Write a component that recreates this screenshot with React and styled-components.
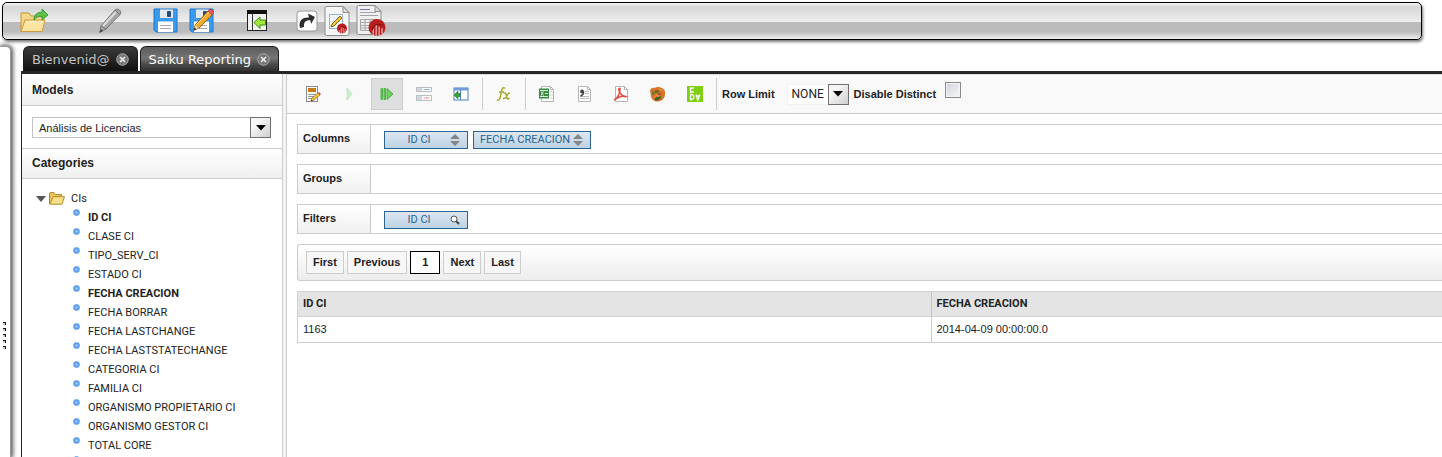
import React, { useState } from 'react';
import styled, { createGlobalStyle, css } from 'styled-components';

const Global = createGlobalStyle`
  *, *::before, *::after { box-sizing: border-box; }
  html, body { margin: 0; background: #fff; }
  body { font: 11px/16px "Liberation Sans", Arial, sans-serif; color: #222; }
  button, select, input { font: inherit; color: inherit; margin: 0; }
  h2, ul { margin: 0; padding: 0; }
`;

const caps = css`font-family: Roboto, "Liberation Sans", sans-serif;`;

const Page = styled.div`
  display: flex;
  flex-direction: column;
  height: 100vh;
  overflow: hidden;
`;

const LauncherBar = styled.header`
  display: flex;
  align-items: center;
  flex: none;
  height: 38px;
  margin: 2px 20px 0 2px;
  padding-left: 16px;
  border: 1px solid #000;
  border-radius: 5px;
  background: linear-gradient(#f4f4f4 0, #d6d6d6 4px, #efefef 19px, #bcbcbc 19px, #bcbcbc 29px, #f0f0f0 100%);
  box-shadow: 1px 2px 3px #777;
`;

const LauncherButton = styled.button`
  display: flex;
  align-items: center;
  justify-content: center;
  width: ${p => p.$width}px;
  height: 36px;
  margin-left: ${p => p.$gap || 0}px;
  padding: 0;
  border: 0;
  background: none;
`;

const Workspace = styled.div`
  display: flex;
  flex: 1;
  min-height: 0;
  padding-top: 6px;
`;

const Drawer = styled.aside`
  display: flex;
  align-items: center;
  width: 11px;
  margin-right: 10px;
  padding: 168px 0 0 3px;
  border: 1px solid #999;
  border-width: 1px 1px 0 0;
  border-radius: 0 5px 0 0;
  background: #fff;
  box-shadow: 1px 0 4px 1px #555;
`;

const Content = styled.div`
  display: flex;
  flex-direction: column;
  flex: 1;
  min-width: 0;
`;

const TabStrip = styled.nav`
  display: flex;
  gap: 2px;
  flex: none;
  padding-left: 2px;
  border-bottom: 3px solid #262626;
`;

const Tab = styled.div`
  display: flex;
  align-items: center;
  gap: 6px;
  height: 25px;
  padding: 1px 8px 0;
  border: 1px solid #1a1a1a;
  border-bottom: 0;
  border-radius: 6px 6px 0 0;
  font: 13px/20px "DejaVu Sans", Verdana, sans-serif;
  color: ${p => (p.$active ? '#fff' : '#c4c4c4')};
  background: ${p => (p.$active
    ? 'linear-gradient(#5c5c5c, #747474 45%, #484848 75%, #303030)'
    : 'linear-gradient(#3a3a3a, #262626 50%, #101010)')};
`;

const TabLabel = styled.button`
  padding: 0;
  border: 0;
  background: none;
`;

const CloseButton = styled.button`
  display: flex;
  padding: 0;
  border: 0;
  background: none;
`;

const Panes = styled.div`
  display: flex;
  flex: 1;
  min-height: 0;
  border-left: 1px solid #222;
`;

const Sidebar = styled.aside`
  width: 261px;
  overflow: hidden;
  border-right: 1px solid #ccc;
`;

const SideTitle = styled.h2`
  height: ${p => p.$height}px;
  padding: ${p => (p.$ruled ? 6 : 8)}px 10px 0;
  border: 0 solid #ccc;
  border-width: ${p => (p.$ruled ? '1px 0' : '0 0 1px')};
  font-size: 12px;
  line-height: 16px;
  background: linear-gradient(#fff, #efefef);
`;

const ModelPicker = styled.div`
  padding: 11px 11px 10px 10px;
`;

const SelectBox = styled.div`
  position: relative;
  width: ${p => p.$width || '100%'};
`;

const Select = styled.select`
  display: block;
  width: 100%;
  height: 21px;
  padding: 0 24px 0 ${p => (p.$plain ? 4 : 6)}px;
  border: 1px solid ${p => (p.$plain ? '#f2f2f2' : '#c4c4c4')};
  border-radius: 0;
  appearance: none;
  background: #fff;
  ${p => p.$plain && css`font: 12px/16px Roboto, sans-serif;`}
`;

const SelectArrow = styled.span`
  position: absolute;
  top: 0;
  right: 0;
  display: flex;
  align-items: center;
  justify-content: center;
  width: 21px;
  height: 21px;
  border: 1px solid #707070;
  background: linear-gradient(135deg, #f6f6f6 30%, #cfcfcf);
  pointer-events: none;
`;

const Tree = styled.div`
  padding: 10px 0 0 14px;
`;

const TreeFolder = styled.button`
  display: flex;
  align-items: center;
  gap: 3px;
  height: 19px;
  padding: 0;
  border: 0;
  background: none;
  ${caps}
`;

const FolderName = styled.span`
  padding: 1px 0 0 3px;
`;

const TreeList = styled.ul`
  padding: 0 0 0 37px;
  list-style: none;
`;

const TreeItem = styled.li`
  display: flex;
  gap: 8px;
  height: 19px;
  line-height: 19px;
  white-space: nowrap;
  font-weight: ${p => (p.$used ? 700 : 400)};
  ${caps}
`;

const Bullet = styled.span`
  width: 7px;
  height: 7px;
  margin: 1px 0 0;
  border: 1px solid #5b9bea;
  border-radius: 50%;
  background: radial-gradient(#9ccaff, #3f87e0);
`;

const Splitter = styled.div`
  width: 4px;
  border-right: 1px solid #ccc;
  background: #f3f3f3;
`;

const Main = styled.main`
  flex: 1;
  min-width: 0;
`;

const ActionBar = styled.div`
  display: flex;
  align-items: center;
  gap: 5px;
  height: 40px;
  padding-left: 10px;
  border-top: 1px solid #ddd;
  border-bottom: 1px solid #c9c9c9;
  background: #f9f9f9;
`;

const ActionButton = styled.button`
  display: flex;
  align-items: center;
  justify-content: center;
  width: 32px;
  height: 32px;
  padding: 0;
  border: 1px solid ${p => (p.$on ? '#ccc' : 'transparent')};
  background: ${p => (p.$on ? '#dedede' : 'none')};
  opacity: ${p => (p.$dim ? 0.4 : 1)};
`;

const Divider = styled.span`
  width: 1px;
  height: 32px;
  background: #ccc;
`;

const ActionLabel = styled.label`
  font-weight: 700;
  white-space: nowrap;
`;

const Spacer = styled.span`
  width: 2px;
`;

const CheckBox = styled.input`
  appearance: none;
  width: 16px;
  height: 16px;
  && { margin: 0 0 8px 4px; }
  border: 1px solid #8a8a8a;
  background: linear-gradient(135deg, #cfd2d8, #f8f8f8);
  box-shadow: inset 0 0 0 1px #f4f4f4;
`;

const Query = styled.div`
  display: flex;
  flex-direction: column;
  gap: 10px;
  padding: 10px 0 0 10px;
`;

const Axis = styled.section`
  display: flex;
  height: 30px;
  border: 1px solid #ccc;
  border-right: 0;
`;

const AxisName = styled.h2`
  width: 73px;
  padding: 4px 5px 0;
  border-right: 1px solid #ccc;
  font-size: 11px;
  line-height: 18px;
  background: linear-gradient(#fff, #f0f0f0);
`;

const AxisFields = styled.div`
  display: flex;
  gap: 5px;
  padding: 6px 13px;
`;

const Field = styled.button`
  display: flex;
  align-items: center;
  gap: 3px;
  height: 18px;
  padding: 0 7px 0 6px;
  border: 1px solid #2c6390;
  color: #2c6390;
  background: linear-gradient(#dbe7f1, #bdd2e3);
  ${caps}
`;

const FieldName = styled.span`
  min-width: 56px;
  text-align: center;
`;

const Pager = styled.nav`
  display: flex;
  gap: 3px;
  height: 37px;
  padding: 6px 8px;
  border: 1px solid #ccc;
  border-right: 0;
  border-radius: 3px 0 0 3px;
  background: linear-gradient(#fff, #ededed);
`;

const PageButton = styled.button`
  height: 23px;
  padding: 0 ${p => (p.$current ? 11 : 6)}px 1px;
  border: 1px solid ${p => (p.$current ? '#000' : '#ccc')};
  font-weight: 700;
  background: ${p => (p.$current ? '#fff' : '#f7f7f7')};
`;

const Results = styled.table`
  width: calc(110% + 8px);
  border-collapse: collapse;
  table-layout: fixed;

  th, td {
    padding: 0 5px 1px;
    border: 1px solid #ccc;
    border-right: 0;
    text-align: left;
  }
  td {
    height: 26px;
    padding-bottom: 2px;
  }
  th {
    height: 25px;
    border-color: #d2d2d2;
    background: #e4e4e4;
    ${caps}
  }
  th + th { border-left-color: #c4c4c4; }
`;

/* ---------- icons ---------- */

const OpenIcon = () => (
  <svg width="30" height="26" viewBox="0 0 30 26">
    <path d="M2 23V5h8l2 3h12v4" fill="#f3d78a" stroke="#c8952e" />
    <path d="M2 23.500 6 12h20l-3 11.500z" fill="#fbe3a0" stroke="#cf9a35" />
    <path d="M7 14h17" stroke="#fff5d4" />
    <path d="M15 12c0-6 4-8 8-7.500V1l6 6-6 5V8.500c-3-.5-6 .5-8 3.500z" fill="#5cc24a" stroke="#3c9a35" />
  </svg>
);
const PencilIcon = () => (
  <svg width="25" height="28" viewBox="0 0 25 28">
    <path d="M2 25l1-6L17 3q2-2 4.500 0t.5 4.500L8 22z" fill="#a6a6a6" stroke="#7a7a7a" />
    <path d="M5 19 18 5" stroke="#ddd" strokeWidth="2" />
    <path d="M17 3l5 5M3 19l5 3" stroke="#777" />
    <path d="M1 26l2-4 2 2z" fill="#444" />
  </svg>
);
const SaveIcon = ({ edit }) => (
  <svg width="25" height="27" viewBox="0 0 25 27">
    <path d="M1 1h23v23H3l-2-2z" fill="#3a9bee" stroke="#1b74cc" />
    <rect x="7" y="1.500" width="13" height="8.500" fill="#e4e9ef" />
    <rect x="14" y="3" width="4" height="6" rx="1" fill="#27487a" />
    <rect x="5" y="13.500" width="15" height="10.500" fill="#fff" />
    <path d="M7 17.500h11M7 20.500h11" stroke="#aaa" />
    {edit && (
      <g>
        <path d="M5 22l1-5L19 3l4 4L10 20z" fill="#f3a92c" stroke="#9b6114" />
        <path d="M7 17 20 4" stroke="#ffd980" />
        <path d="M19 3l1-1.500q2-1 4 1t.5 3L23 7z" fill="#e2585c" stroke="#b33a40" strokeWidth=".6" />
        <path d="M5 22l1-5 4 3z" fill="#ecd2a0" />
        <path d="M4.500 22.500l1-3 2 2z" fill="#222" />
      </g>
    )}
  </svg>
);
const PanelIcon = () => (
  <svg width="20" height="22" viewBox="0 0 20 22">
    <path d="M.5 3v17.500M19.500 3v17.500M0 20.500h20" stroke="#222" fill="none" />
    <rect x="1" y="3" width="18" height="17" fill="#f0f0f0" />
    <path d="M0 0h20v4H0z" fill="#111" />
    <path d="M5.500 4v16" stroke="#333" />
    <path d="M7 12.500 13 7v3h5.500v5H13v3.500z" fill="#a4e63a" stroke="#3f8c12" />
  </svg>
);
const ForwardIcon = () => (
  <svg width="22" height="22" viewBox="0 0 22 22">
    <rect x="1" y="1" width="20" height="20" rx="3" fill="#fff" stroke="#999" />
    <path d="M4 18c-2-8 3-11 9-10.500L12 3.500 19 7l-4 7-.5-3.500c-4-.8-7 1-6.500 6.500z" fill="#2e2e2e" />
  </svg>
);
const Burst = ({ x, y, r }) => (
  <g transform={`translate(${x} ${y}) scale(${r})`}>
    <circle r="1" fill="#b81e1e" />
    <path d="M-.45 1V.15M-.1 1V-.3M.25 1V-.1M.6 .8V.1" stroke="#f0c8c8" strokeWidth=".13" />
    <path d="M-.6 .3Q-.3-.7 .7-.2" stroke="#8e1010" strokeWidth=".14" fill="none" />
  </g>
);
const SheetIcon = () => (
  <svg width="26" height="31" viewBox="0 0 26 31">
    <path d="M1 2q0-1.500 1.500-1.500H19L25 6.500V28q0 1.500-1.500 1.500h-21Q1 29.500 1 28z" fill="#f5f5f5" stroke="#8c8c8c" />
    <path d="M19 .5v6h6z" fill="#ddd" stroke="#8c8c8c" />
    <rect x="5.500" y="8.500" width="13" height="14" fill="#fff" stroke="#9ab4cf" />
    <path d="M6 12h12M6 15.500h12M6 19h12M10 9v13M14 9v13" stroke="#d8e4ef" />
    <path d="M7 21l1-3 8-8 2 2-8 8z" fill="#f2c430" stroke="#5e5024" strokeWidth=".8" />
    <Burst x={18} y={22.5} r={5} />
  </svg>
);
const ReportIcon = () => (
  <svg width="30" height="32" viewBox="0 0 30 32">
    <path d="M1 2q0-1.500 1.500-1.500H19L25 6.500V28q0 1.500-1.500 1.500h-21Q1 29.500 1 28z" fill="#f0f0f0" stroke="#8c8c8c" />
    <path d="M19 .5v6h6z" fill="#ddd" stroke="#8c8c8c" />
    <path d="M4 4.500h10" stroke="#7a7ab4" />
    <path d="M4 7.500h16M4 10.500h18" stroke="#a3a3a8" />
    <path d="M4.500 14.500h16v11h-16zM4.500 17.500h16M4.500 20.500h16M4.500 23h16M9 14.500v11M14 14.500v11" fill="none" stroke="#a6a6a6" />
    <Burst x={21} y={22.5} r={8.5} />
  </svg>
);
const CloseIcon = () => (
  <svg width="13" height="13" viewBox="0 0 13 13">
    <circle cx="6.500" cy="6.500" r="5.800" fill="#777" stroke="#a8a8a8" />
    <path d="M4 4l5 5M9 4l-5 5" stroke="#eee" strokeWidth="1.600" />
  </svg>
);
const DownIcon = () => <svg width="10" height="6" viewBox="0 0 10 6"><path d="M0 0h10L5 5.500z" fill="#000" /></svg>;
const ExpandIcon = () => <svg width="10" height="6" viewBox="0 0 10 6"><path d="M0 0h10L5 6z" fill="#555" /></svg>;
const FolderIcon = () => (
  <svg width="16" height="13" viewBox="0 0 16 13">
    <path d="M.5 12V1.500q0-1 1-1H5l1.500 2h6V5" fill="#e8c25c" stroke="#b08a2c" />
    <path d="M.8 12.200 4 4.700h11.500l-2.700 7.500z" fill="#fbe08c" stroke="#b08a2c" />
  </svg>
);
const GripIcon = () => (
  <svg width="4" height="28" viewBox="0 0 4 28">
    {[0, 6, 12, 18, 24].map(y => (
      <g key={y}><path d={`M0 ${y}h3v3H2V${y + 1}H0z`} fill="#111" /><path d={`M0 ${y + 1}h2v2H0z`} fill="#ccc" /></g>
    ))}
  </svg>
);
const SortIcon = () => (
  <svg width="10" height="12" viewBox="0 0 10 12">
    <path d="M0 5 5 0l5 5zM0 7l5 5 5-5z" fill="#858585" />
  </svg>
);
const SearchIcon = () => (
  <svg width="10" height="12" viewBox="0 0 10 12">
    <path d="M6 7l3 3" stroke="#444" strokeWidth="2" />
    <circle cx="4" cy="5" r="3" fill="#fff" stroke="#555" />
  </svg>
);

const EditReportIcon = () => (
  <svg width="16" height="16" viewBox="0 0 16 16">
    <rect x="1.500" y=".5" width="11" height="15" fill="#f7f7f7" stroke="#8b8b8b" />
    <rect x="3" y="2" width="8" height="4" fill="#c77818" />
    <path d="M3 8.500h8M3 10.500h7M3 12.500h5" stroke="#999" />
    <path d="M6 15l1-3 6-5 2 2-6 5z" fill="#f4c63c" stroke="#8c6a1c" strokeWidth=".7" />
    <path d="M13 7l1-1 2 2-1 1z" fill="#d64a4a" />
    <path d="M6 15l.6-1.600 1 1z" fill="#222" />
  </svg>
);
const RunIcon = () => <svg width="16" height="16" viewBox="0 0 16 16"><path d="M5 2l5 6-5 6z" fill="#8fe08f" stroke="#72c972" /></svg>;
const AutoRunIcon = () => (
  <svg width="16" height="16" viewBox="0 0 16 16">
    <path d="M2 2.500h1.500v11H2zM5 2.500h1.500v11H5zM8 2.500l6 5.500-6 5.500z" fill="#6ad45f" stroke="#45ad3e" strokeWidth=".9" />
  </svg>
);
const FieldsIcon = () => (
  <svg width="16" height="16" viewBox="0 0 16 16">
    <path d="M.5 1.500h15v4H.5zM.5 9.500h15v5H.5z" fill="#fff" stroke="#b9bdc4" />
    <path d="M1 2h5v3H1zM1 10h5v4H1z" fill="#d4d7dc" />
    <path d="M7.500 3.500h6" stroke="#7db3e6" /><path d="M7.500 12h6" stroke="#e68d8d" />
  </svg>
);
const ToggleSideIcon = () => (
  <svg width="16" height="16" viewBox="0 0 16 16">
    <rect x="1" y="2" width="14" height="12" fill="#fff" stroke="#4a7fc4" />
    <path d="M1 2h14v2.500H1z" fill="#6d9edb" />
    <path d="M7.500 4v10" stroke="#4a7fc4" />
    <path d="M1 9l4-4v2.500h2v3H5V13z" fill="#37a03a" stroke="#1f7a28" strokeWidth=".6" />
  </svg>
);
const FormulaIcon = () => (
  <svg width="16" height="16" viewBox="0 0 16 16" fill="none" stroke="#a0a826" strokeWidth="1.400">
    <path d="M9 2.500Q7 .5 6 3.500L4 12q-1 3-3 2M3 6h5" />
    <path d="M7.500 7.500q2-1.500 2.500.5l1 4q.5 2 2.500 0M14 7q-1.500-.5-3 2.500-1.500 3.500-4 3" />
  </svg>
);
const Sheet = ({ children }) => (
  <svg width="16" height="16" viewBox="0 0 16 16">
    <path d="M2.500.5h9l3 3v12h-12z" fill="#fff" stroke="#b5b5b5" />
    <path d="M11.500.5v3h3" fill="none" stroke="#b5b5b5" />
    {children}
  </svg>
);
const ExcelIcon = () => (
  <Sheet>
    <path d="M11 6h3M11 9h3M11 12h3" stroke="#ccc" />
    <rect x="0" y="2.500" width="10" height="10" fill="#3a8a40" />
    <path d="M1 4.500h8M1 10.500h8" stroke="#d8efd6" />
    <path d="M2 5.500l2.500 4M4.500 5.500l-2.500 4M6 7.500h3" stroke="#e2f3e0" />
  </Sheet>
);
const CsvIcon = () => (
  <Sheet>
    <path d="M9 5.500h4M9 7.500h4M4 10.500h9M4 12.500h9" stroke="#bbb" />
    <circle cx="6" cy="5.500" r="1.900" fill="#444" /><path d="M7.500 5.500q.5 3-3 4.500" stroke="#444" fill="none" strokeWidth="1.500" />
  </Sheet>
);
const PdfIcon = () => (
  <Sheet>
    <path d="M1 14q4-2 5.500-7.500T6 2.500q-1 2 2 5.500t5 2.500q-3-1-6.500.5T1 14z" fill="none" stroke="#df5148" strokeWidth="1.500" />
  </Sheet>
);
const SphereIcon = () => (
  <svg width="16" height="16" viewBox="0 0 16 16">
    <path d="M0 4q2-3 4-2 7-3 11 3 1 8-5 10-6 2-9-4z" fill="#d9752a" />
    <path d="M2 5q3 1 5 0t3 1q-2 2-4 1-2 1-3 3-1-2-1-5z" fill="#6b7a2b" />
    <path d="M5 15q-1-4 2-4t4-1q1 4-6 5z" fill="#466427" />
    <path d="M4 12q2-4 5-2M9 3l3 2" stroke="#e9a13c" fill="none" />
    <path d="M5 5h3M8 8h3" stroke="#763818" />
  </svg>
);
const CdaIcon = () => (
  <svg width="16" height="16" viewBox="0 0 16 16">
    <rect width="16" height="16" fill="#80cf12" />
    <path d="M7 2H3.500v4H7M3.500 8.500v5H5q2-1 2-2.500t-2-2.500zM9 8.500l1.800 5.500L13 8.500M9.500 10h3" stroke="#fff" fill="none" strokeWidth="1.300" />
  </svg>
);

/* ---------- data ---------- */

const launchers = [
  ['Abrir', OpenIcon, 30, 0],
  ['Editar', PencilIcon, 25, 49],
  ['Guardar', SaveIcon, 25, 30],
  ['Guardar como', () => <SaveIcon edit />, 25, 11],
  ['Panel', PanelIcon, 20, 33],
  ['Siguiente', ForwardIcon, 22, 29],
  ['Nueva hoja', SheetIcon, 26, 6],
  ['Nuevo informe', ReportIcon, 30, 6],
];

const categories = [
  ['ID CI', true], ['CLASE CI'], ['TIPO_SERV_CI'], ['ESTADO CI'], ['FECHA CREACION', true],
  ['FECHA BORRAR'], ['FECHA LASTCHANGE'], ['FECHA LASTSTATECHANGE'], ['CATEGORIA CI'],
  ['FAMILIA CI'], ['ORGANISMO PROPIETARIO CI'], ['ORGANISMO GESTOR CI'], ['TOTAL CORE'], [''],
];

const actionGroups = [
  [['Edit report', EditReportIcon], ['Run', RunIcon, 'dim'], ['Auto run', AutoRunIcon, 'on'], ['Fields', FieldsIcon], ['Toggle sidebar', ToggleSideIcon]],
  [['Formula', FormulaIcon]],
  [['Excel', ExcelIcon], ['CSV', CsvIcon], ['PDF', PdfIcon], ['Report designer', SphereIcon], ['CDA', CdaIcon]],
];

const axes = [
  ['Columns', ['ID CI', 'FECHA CREACION'], SortIcon],
  ['Groups', []],
  ['Filters', ['ID CI'], SearchIcon],
];

function DropDown({ id, width, plain, options, label }) {
  return (
    <SelectBox $width={width}>
      <Select id={id} $plain={plain} aria-label={label}>
        {options.map(o => <option key={o}>{o}</option>)}
      </Select>
      <SelectArrow><DownIcon /></SelectArrow>
    </SelectBox>
  );
}

export default function App() {
  const [distinctOff, setDistinctOff] = useState(false);
  return (
    <Page>
      <Global />
      <LauncherBar>
        {launchers.map(([name, Icon, width, gap]) => (
          <LauncherButton key={name} aria-label={name} $width={width} $gap={gap}><Icon /></LauncherButton>
        ))}
      </LauncherBar>
      <Workspace>
        <Drawer><GripIcon /></Drawer>
        <Content>
          <TabStrip>
            {['Bienvenid@', 'Saiku Reporting'].map((name, i) => (
              <Tab key={name} $active={i === 1}>
                <TabLabel>{name}</TabLabel>
                <CloseButton aria-label="Cerrar"><CloseIcon /></CloseButton>
              </Tab>
            ))}
          </TabStrip>
          <Panes>
            <Sidebar>
              <SideTitle $height={32}>Models</SideTitle>
              <ModelPicker>
                <DropDown label="Models" options={['Análisis de Licencias']} />
              </ModelPicker>
              <SideTitle $height={31} $ruled>Categories</SideTitle>
              <Tree>
                <TreeFolder><ExpandIcon /><FolderIcon /><FolderName>CIs</FolderName></TreeFolder>
                <TreeList>
                  {categories.map(([name, used]) => (
                    <TreeItem key={name} $used={used}><Bullet />{name}</TreeItem>
                  ))}
                </TreeList>
              </Tree>
            </Sidebar>
            <Splitter />
            <Main>
              <ActionBar>
                {actionGroups.map((group, i) => (
                  <React.Fragment key={i}>
                    {group.map(([name, Icon, state]) => (
                      <ActionButton key={name} aria-label={name} $on={state === 'on'} $dim={state === 'dim'}><Icon /></ActionButton>
                    ))}
                    <Divider />
                  </React.Fragment>
                ))}
                <ActionLabel htmlFor="limit">Row Limit</ActionLabel>
                <Spacer />
                <DropDown id="limit" width="62px" plain options={['NONE']} />
                <ActionLabel htmlFor="distinct">Disable Distinct</ActionLabel>
                <CheckBox id="distinct" type="checkbox" checked={distinctOff} onChange={e => setDistinctOff(e.target.checked)} />
              </ActionBar>
              <Query>
                {axes.map(([name, fields, Icon]) => (
                  <Axis key={name}>
                    <AxisName>{name}</AxisName>
                    <AxisFields>
                      {fields.map(f => <Field key={f}><FieldName>{f}</FieldName><Icon /></Field>)}
                    </AxisFields>
                  </Axis>
                ))}
                <Pager>
                  {['First', 'Previous', '1', 'Next', 'Last'].map(p => (
                    <PageButton key={p} $current={p === '1'}>{p}</PageButton>
                  ))}
                </Pager>
                <Results>
                  <thead><tr><th>ID CI</th><th>FECHA CREACION</th></tr></thead>
                  <tbody><tr><td>1163</td><td>2014-04-09 00:00:00.0</td></tr></tbody>
                </Results>
              </Query>
            </Main>
          </Panes>
        </Content>
      </Workspace>
    </Page>
  );
}
